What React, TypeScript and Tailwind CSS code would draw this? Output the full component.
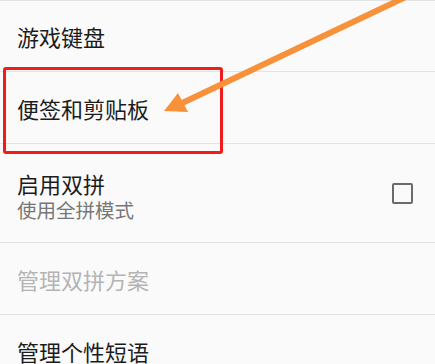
import React from "react";

const font = { fontFamily: '"Noto Sans CJK SC", "Noto Sans", sans-serif' };

export default function App() {
  return (
    <div className="relative w-[435px] h-[364px] overflow-hidden bg-[#fafafa]" style={font}>
      <div className="border-t border-[#e3e3e3]">
        <div className="h-[71px] border-b border-[#e3e3e3] flex items-center pl-[17px]">
          <span className="text-[22px] leading-[28px] text-[#1c1c1c]">游戏键盘</span>
        </div>
        <div className="h-[72px] border-b border-[#e3e3e3] flex items-center pl-[17px]">
          <span className="text-[22px] leading-[28px] text-[#1c1c1c]">便签和剪贴板</span>
        </div>
        <div className="h-[99px] border-b border-[#e3e3e3] flex items-center justify-between pl-[17px] pr-[22px]">
          <div className="flex flex-col pt-[6px]">
            <span className="text-[22px] leading-[28px] text-[#1c1c1c]">启用双拼</span>
            <span className="text-[19.5px] leading-[26px] text-[#777]">使用全拼模式</span>
          </div>
          <div className="w-[21px] h-[21px] border-2 border-[#6b6b6b] rounded-[2px]" />
        </div>
        <div className="h-[72px] border-b border-[#e3e3e3] flex items-center pl-[17px]">
          <span className="text-[22px] leading-[28px] text-[#b4b4b4]">管理双拼方案</span>
        </div>
        <div className="h-[72px] flex items-center pl-[17px]">
          <span className="text-[22px] leading-[28px] text-[#1c1c1c]">管理个性短语</span>
        </div>
      </div>

      <div className="absolute left-[3px] top-[67px] w-[220px] h-[87px] border-[3px] border-[#f01c1c] rounded-[3px]" />

      <svg className="absolute left-0 top-0" width="435" height="364" viewBox="0 0 435 364">
        <line x1="412" y1="-6" x2="178" y2="105" stroke="#f7913a" strokeWidth="6" />
        <polygon points="164,111 178,93 188,112" fill="#f7913a" />
      </svg>
    </div>
  );
}
